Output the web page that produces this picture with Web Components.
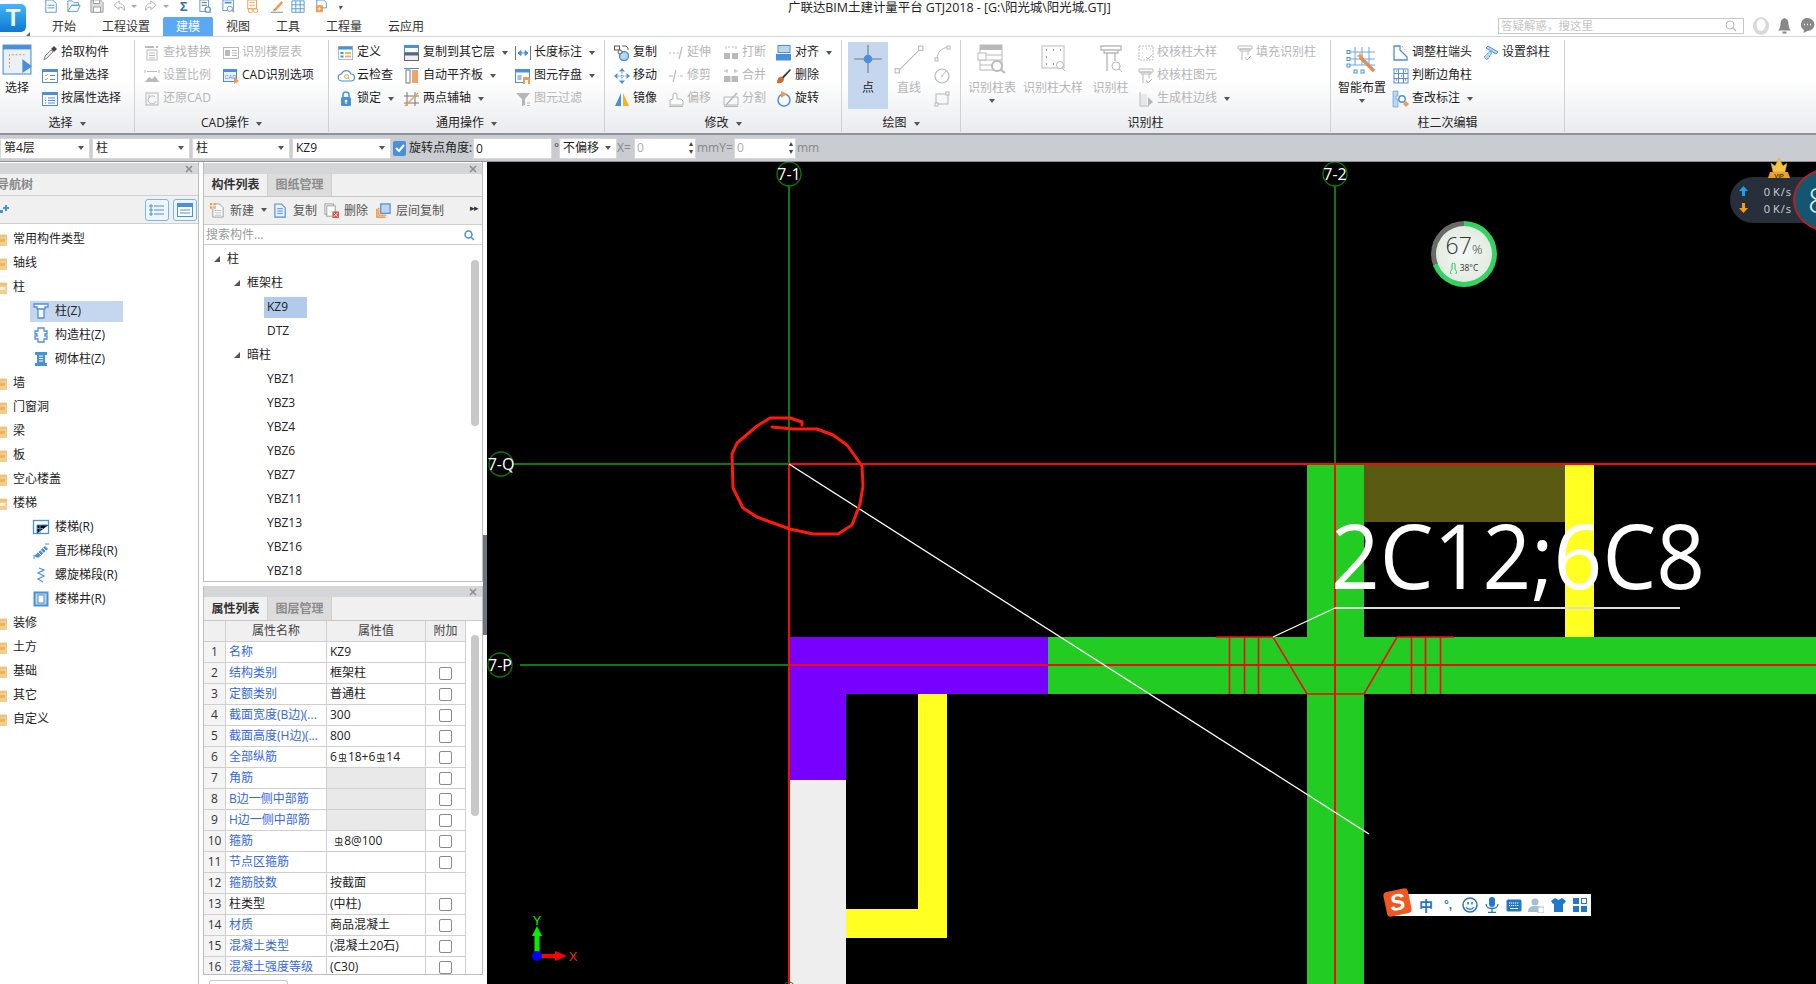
<!DOCTYPE html>
<html lang="zh">
<head>
<meta charset="utf-8">
<title>GTJ2018</title>
<style>
  html, body { margin: 0; height: 984px; overflow: hidden; background: #fff; }
  body { font: 12px/1.2 "Open Sans", "Noto Sans CJK SC", sans-serif; color: #222; }
</style>
</head>
<body>
<gtj-app>
  <gtj-head slot="head"></gtj-head>
  <gtj-ribbon slot="ribbon">
    <rb-group label="选择" w="135" pad="2" caret>
      <rb-large icon="select" label="选择" w="30"></rb-large>
      <rb-col pad="10">
        <rb-item icon="pick" label="拾取构件"></rb-item>
        <rb-item icon="batch" label="批量选择"></rb-item>
        <rb-item icon="attr" label="按属性选择"></rb-item>
      </rb-col>
    </rb-group>
    <rb-group label="CAD操作" w="194" pad="9" caret>
      <rb-col w="79">
        <rb-item icon="find" label="查找替换" off></rb-item>
        <rb-item icon="scale" label="设置比例" off></rb-item>
        <rb-item icon="restore" label="还原CAD" off></rb-item>
      </rb-col>
      <rb-col>
        <rb-item icon="floors" label="识别楼层表" off></rb-item>
        <rb-item icon="cad" label="CAD识别选项"></rb-item>
      </rb-col>
    </rb-group>
    <rb-group label="通用操作" w="276" pad="9" caret>
      <rb-col w="66">
        <rb-item icon="define" label="定义"></rb-item>
        <rb-item icon="cloud" label="云检查"></rb-item>
        <rb-item icon="lock" label="锁定" caret></rb-item>
      </rb-col>
      <rb-col w="111">
        <rb-item icon="copylayer" label="复制到其它层" caret></rb-item>
        <rb-item icon="align" label="自动平齐板" caret></rb-item>
        <rb-item icon="twopoint" label="两点辅轴" caret></rb-item>
      </rb-col>
      <rb-col>
        <rb-item icon="measure" label="长度标注" caret></rb-item>
        <rb-item icon="store" label="图元存盘" caret></rb-item>
        <rb-item icon="filter" label="图元过滤" off></rb-item>
      </rb-col>
    </rb-group>
    <rb-group label="修改" w="237" pad="9" caret>
      <rb-col w="54">
        <rb-item icon="copy" label="复制"></rb-item>
        <rb-item icon="move" label="移动"></rb-item>
        <rb-item icon="mirror" label="镜像"></rb-item>
      </rb-col>
      <rb-col w="55">
        <rb-item icon="extend" label="延伸" off></rb-item>
        <rb-item icon="trim" label="修剪" off></rb-item>
        <rb-item icon="offset" label="偏移" off></rb-item>
      </rb-col>
      <rb-col w="53">
        <rb-item icon="break" label="打断" off></rb-item>
        <rb-item icon="merge" label="合并" off></rb-item>
        <rb-item icon="split" label="分割" off></rb-item>
      </rb-col>
      <rb-col>
        <rb-item icon="alignto" label="对齐" caret></rb-item>
        <rb-item icon="erase" label="删除"></rb-item>
        <rb-item icon="rotate" label="旋转"></rb-item>
      </rb-col>
    </rb-group>
    <rb-group label="绘图" w="119" pad="6" caret>
      <rb-large icon="point" label="点" w="40" active></rb-large>
      <rb-large icon="line" label="直线" w="42" off></rb-large>
      <rb-col w="24" pad="4">
        <rb-item icon="arc" off></rb-item>
        <rb-item icon="circle" off></rb-item>
        <rb-item icon="rect" off></rb-item>
      </rb-col>
    </rb-group>
    <rb-group label="识别柱" w="370" pad="0">
      <rb-large icon="rectable" label="识别柱表" w="62" off caret></rb-large>
      <rb-large icon="recdetail" label="识别柱大样" w="60" off></rb-large>
      <rb-large icon="reccol" label="识别柱" w="55" off></rb-large>
      <rb-col w="99">
        <rb-item icon="chk1" label="校核柱大样" off></rb-item>
        <rb-item icon="chk2" label="校核柱图元" off></rb-item>
        <rb-item icon="edge" label="生成柱边线" off caret></rb-item>
      </rb-col>
      <rb-col>
        <rb-item icon="chk2" label="填充识别柱" off></rb-item>
      </rb-col>
    </rb-group>
    <rb-group label="柱二次编辑" w="234" pad="0">
      <rb-large icon="smart" label="智能布置" w="62" caret></rb-large>
      <rb-col w="90">
        <rb-item icon="head" label="调整柱端头"></rb-item>
        <rb-item icon="corner" label="判断边角柱"></rb-item>
        <rb-item icon="annot" label="查改标注" caret></rb-item>
      </rb-col>
      <rb-col>
        <rb-item icon="slant" label="设置斜柱"></rb-item>
      </rb-col>
    </rb-group>
  </gtj-ribbon>
  <gtj-options slot="options"></gtj-options>

  <gtj-nav slot="nav">
    <nav-folder label="常用构件类型"></nav-folder>
    <nav-folder label="轴线"></nav-folder>
    <nav-folder label="柱" open></nav-folder>
    <nav-leaf icon="n-col" label="柱(Z)" selected></nav-leaf>
    <nav-leaf icon="n-gz" label="构造柱(Z)"></nav-leaf>
    <nav-leaf icon="n-qt" label="砌体柱(Z)"></nav-leaf>
    <nav-folder label="墙"></nav-folder>
    <nav-folder label="门窗洞"></nav-folder>
    <nav-folder label="梁"></nav-folder>
    <nav-folder label="板"></nav-folder>
    <nav-folder label="空心楼盖"></nav-folder>
    <nav-folder label="楼梯" open></nav-folder>
    <nav-leaf icon="n-stair" label="楼梯(R)"></nav-leaf>
    <nav-leaf icon="n-run" label="直形梯段(R)"></nav-leaf>
    <nav-leaf icon="n-spiral" label="螺旋梯段(R)"></nav-leaf>
    <nav-leaf icon="n-well" label="楼梯井(R)"></nav-leaf>
    <nav-folder label="装修"></nav-folder>
    <nav-folder label="土方"></nav-folder>
    <nav-folder label="基础"></nav-folder>
    <nav-folder label="其它"></nav-folder>
    <nav-folder label="自定义"></nav-folder>
  </gtj-nav>

  <gtj-side slot="side">
    <gtj-parts>
      <tree-node level="0" label="柱"></tree-node>
      <tree-node level="1" label="框架柱"></tree-node>
      <tree-node level="2" label="KZ9" selected></tree-node>
      <tree-node level="2" label="DTZ"></tree-node>
      <tree-node level="1" label="暗柱"></tree-node>
      <tree-node level="2" label="YBZ1"></tree-node>
      <tree-node level="2" label="YBZ3"></tree-node>
      <tree-node level="2" label="YBZ4"></tree-node>
      <tree-node level="2" label="YBZ6"></tree-node>
      <tree-node level="2" label="YBZ7"></tree-node>
      <tree-node level="2" label="YBZ11"></tree-node>
      <tree-node level="2" label="YBZ13"></tree-node>
      <tree-node level="2" label="YBZ16"></tree-node>
      <tree-node level="2" label="YBZ18"></tree-node>
    </gtj-parts>
    <gtj-props></gtj-props>
  </gtj-side>

  <gtj-canvas slot="canvas">
    <cpu-meter></cpu-meter>
    <net-speed></net-speed>
    <ime-bar></ime-bar>
  </gtj-canvas>
</gtj-app>

<script>
const B = '#4a90d9', O = '#f39a4b', G = '#8c8c8c'

// every icon is [viewBox size, svg body]
const ICONS = {
	select: [28, `<rect x="1" y="1" width="26" height="27" fill="#eaf1fb" stroke="${B}"/><rect x="1" y="1" width="26" height="4" fill="${B}"/><path d="M7 22V10h14" fill="none" stroke="#f0a020" stroke-dasharray="2 1.5"/><path d="M19 14l9 7-9 6z" fill="${B}"/>`],
	pick: [16, `<path d="M2 15l1-4 6-6 2 2-6 6z" fill="#e6e6e6" stroke="#888"/><path d="M9 4l3-3 3 3-3 3z" fill="#444"/>`],
	batch: [16, `<rect x=".5" y="1.5" width="15" height="13" fill="#fff" stroke="${B}"/><rect x=".5" y="1.5" width="15" height="2.5" fill="${B}"/><path d="M3 7l1 1 2-2M3 11l1 1 2-2" fill="none" stroke="${O}"/><path d="M8 7.5h5M8 11.5h5" stroke="${B}"/>`],
	attr: [16, `<rect x=".5" y="1.5" width="15" height="13" fill="#fff" stroke="${B}"/><rect x=".5" y="1.5" width="15" height="2.5" fill="${B}"/><path d="M3 7h1M3 9.5h1M3 12h1M6 7h7M6 9.5h7M6 12h7" stroke="${B}"/>`],
	find: [16, `<path d="M1 2h9M12 2h2" stroke="${G}" stroke-width="2"/><rect x="3" y="5" width="10" height="10" fill="#fff" stroke="${G}"/><path d="M5 8h6M5 10.5h6M5 13h6" stroke="${G}"/>`],
	scale: [16, `<path d="M1 2v3M15 2v3M3 3.5h10" stroke="${G}"/><path d="M1 14l4-5 3 2 3-3 4 6z" fill="${G}"/>`],
	restore: [16, `<rect x="2" y="2" width="12" height="12" fill="none" stroke="${G}"/><path d="M11 6A4 4 0 1 0 12 10M5 7V3.5" fill="none" stroke="${G}"/>`],
	floors: [16, `<rect x=".5" y="2.5" width="15" height="11" fill="#fff" stroke="${G}"/><rect x="2" y="5" width="5" height="6" fill="${G}"/><path d="M9 5.5h5M9 8h5M9 10.5h5" stroke="${G}"/>`],
	cad: [16, `<rect x=".5" y="1.5" width="13" height="12" fill="#eaf1fb" stroke="${B}"/><rect x=".5" y="1.5" width="13" height="2.5" fill="${B}"/><text x="1.5" y="10.5" font-size="5.5" fill="${B}" font-family="Liberation Sans">CAD</text><path d="M11 9l5 4-5 3z" fill="${O}"/>`],
	define: [16, `<rect x=".5" y="1.5" width="14" height="13" fill="#fff" stroke="#9bbde6"/><rect x=".5" y="1.5" width="14" height="3" fill="${B}"/><path d="M2.5 7h3v2h-3zM2.5 10.5h3v2h-3z" fill="${B}"/><path d="M7 7h6v2H7zM7 10.5h6v2H7z" fill="#f6b26b"/>`],
	cloud: [16, `<path d="M4 13a3.5 3.5 0 0 1-.5-7A5 5 0 0 1 13 6a3.5 3.5 0 0 1 0 7z" fill="#fff" stroke="${B}" stroke-width="1.2"/><circle cx="8.5" cy="8.5" r="2" fill="none" stroke="${O}"/><path d="M10 10l1.5 1.5" stroke="${O}"/>`],
	lock: [16, `<rect x="3" y="6" width="10" height="9" rx="1.5" fill="${B}"/><path d="M5 6V4a3 3 0 0 1 6 0v2" fill="none" stroke="${B}" stroke-width="1.5"/><circle cx="8" cy="10" r="1.3" fill="#fff"/><path d="M8 10v3" stroke="#fff"/>`],
	copylayer: [16, `<rect x=".5" y=".5" width="14" height="7" fill="#fff" stroke="${B}"/><rect x=".5" y=".5" width="14" height="2.5" fill="${B}"/><rect x=".5" y="8.5" width="14" height="7" fill="#eee" stroke="#666"/><rect x=".5" y="8.5" width="14" height="2" fill="#666"/>`],
	align: [16, `<path d="M0 .5h15" stroke="${B}"/><rect x="2" y="2" width="4" height="13" fill="#fff" stroke="#777"/><rect x="8" y="2" width="6" height="13" fill="#f4a26b"/>`],
	twopoint: [16, `<path d="M3 1v14M11 1v14M0 5h15M0 12h15" stroke="#777"/><path d="M1 15L14 2" stroke="${O}" stroke-width="1.2"/>`],
	measure: [16, `<path d="M.5 1v14M15.5 1v14" stroke="#777"/><path d="M3 8h10M3 8l3-2.5v5zM13 8l-3-2.5v5z" fill="${B}" stroke="${B}"/>`],
	store: [16, `<rect x=".5" y="1.5" width="14" height="13" fill="#fff" stroke="${B}"/><rect x=".5" y="1.5" width="14" height="3" fill="${B}"/><rect x="2.5" y="7" width="4" height="5" fill="#9bbde6"/><rect x="8" y="9" width="7" height="7" fill="${O}"/><rect x="10" y="12" width="3" height="4" fill="#fff"/>`],
	filter: [16, `<path d="M1 2h14L10 8v6l-3 1V8z" fill="${G}"/><path d="M12 12h3M12 14.5h3" stroke="${G}"/>`],
	copy: [16, `<rect x=".5" y="1" width="5" height="4" fill="none" stroke="#555"/><path d="M8 1h4l2 2v2" fill="none" stroke="#555"/><circle cx="10" cy="11" r="4.5" fill="#bcd6f2" stroke="${B}" stroke-width="1.4"/><circle cx="6" cy="7" r="2" fill="#fff" stroke="#555"/>`],
	move: [16, `<path d="M8 0l3 3.500H5zM8 16l3-3.500H5zM0 8l3.500-3v6zM16 8l-3.500-3v6z" fill="${B}"/><path d="M4 8h8M8 4v8" stroke="${B}" stroke-dasharray="1.5 1"/>`],
	mirror: [16, `<path d="M7 2v13H1z" fill="${B}"/><path d="M9 2v13h6z" fill="#f5b323"/>`],
	extend: [16, `<path d="M1 8h2M5 8h2M9 8h2" stroke="${G}"/><path d="M11 14l3-12" stroke="${G}" stroke-width="1.2"/>`],
	trim: [16, `<path d="M1 8h4M10 8h1M12 8h3" stroke="${G}"/><path d="M5 14l3-12" stroke="${G}" stroke-width="1.2"/>`],
	offset: [16, `<path d="M2 14V9l3-1V4a2 2 0 0 1 4 0v4h4l2 2v4z" fill="#fff" stroke="${G}"/><path d="M1 15.5h14" stroke="${G}"/>`],
	break: [16, `<path d="M3 1v3M13 1v3" stroke="${G}"/><rect x="1" y="8" width="6" height="6" fill="${G}"/><rect x="9" y="8" width="6" height="6" fill="${G}"/><path d="M5 2h2M9 2h2" stroke="${G}"/>`],
	merge: [16, `<path d="M4 1v4M12 1v4M1 3h4M11 3h4" stroke="${G}"/><rect x="1" y="8" width="14" height="6" fill="${G}"/><path d="M8 8v6" stroke="#fff"/>`],
	split: [16, `<path d="M1 14V6h14v8z" fill="none" stroke="${G}"/><path d="M3 14L14 2" stroke="${G}" stroke-width="1.4"/><path d="M1 15.5h14" stroke="${G}"/>`],
	alignto: [16, `<rect x="2" y="0.5" width="12" height="7" fill="#bcd6f2" stroke="${B}"/><rect x="0" y="9" width="15" height="6.5" fill="${B}"/>`],
	erase: [16, `<path d="M6 9L14 1l1 1-8 9z" fill="#333"/><path d="M1 15c0-4 2-7 5-6l2 2c0 3-3 5-7 4z" fill="#d4692a"/>`],
	rotate: [16, `<circle cx="8" cy="9" r="6" fill="none" stroke="${B}" stroke-width="1.5"/><path d="M5 0l6 3-6 4z" fill="${O}"/>`],
	point: [28, `<path d="M14 1v26M1 14h26" stroke="#777"/><circle cx="14" cy="14" r="4" fill="${B}"/>`],
	line: [28, `<path d="M4 25L25 4" stroke="${G}"/><rect x="1" y="23" width="4" height="4" fill="#fff" stroke="${G}"/><rect x="23" y="2" width="4" height="4" fill="#fff" stroke="${G}"/>`],
	arc: [16, `<path d="M3 14C3 7 8 3 14 2" fill="none" stroke="${G}"/><rect x="1" y="13" width="3" height="3" fill="#fff" stroke="${G}"/><rect x="13" y="1" width="3" height="3" fill="#fff" stroke="${G}"/>`],
	circle: [16, `<circle cx="8" cy="8" r="7" fill="none" stroke="${G}" stroke-width="1.2"/><path d="M8 8l4-5" stroke="${G}"/><circle cx="8" cy="8" r="1" fill="${G}"/>`],
	rect: [16, `<rect x="2" y="3" width="12" height="10" fill="none" stroke="${G}"/><rect x="12" y="1" width="3" height="3" fill="#fff" stroke="${G}"/><rect x="1" y="12" width="3" height="3" fill="#fff" stroke="${G}"/>`],
	rectable: [30, `<rect x="3" y="1" width="22" height="25" fill="#fff" stroke="${G}"/><rect x="3" y="1" width="22" height="5" fill="${G}"/><path d="M3 11h22M3 16h22M3 21h22" stroke="${G}"/><rect x="1" y="9" width="8" height="7" fill="#fff" stroke="${G}"/><circle cx="20" cy="22" r="5" fill="#fff" stroke="${G}" stroke-width="2"/><path d="M24 26l4 3" stroke="${G}" stroke-width="2"/>`],
	recdetail: [30, `<rect x="4" y="2" width="22" height="22" fill="none" stroke="${G}"/><path d="M8 6h1M15 6h1M22 6h1M8 13h1M8 20h1M15 20h1" stroke="#555" stroke-width="2"/><circle cx="22" cy="21" r="3.5" fill="#fff" stroke="${G}"/><path d="M24 24l3 3" stroke="${G}"/>`],
	reccol: [30, `<path d="M5 2h20v4H5zM8 6h14v3H8z" fill="#fff" stroke="${G}" stroke-width="1.4"/><path d="M11 9v18M19 9v8" stroke="${G}" stroke-width="1.4"/><circle cx="20" cy="22" r="4" fill="#fff" stroke="${G}"/><path d="M23 25l3 3" stroke="${G}"/>`],
	chk1: [16, `<rect x="1" y="1" width="14" height="14" fill="none" stroke="${G}" stroke-dasharray="2 1"/><path d="M4 4h1M8 4h1M12 4h1M4 8h1M4 12h1" stroke="${G}"/><path d="M8 12l2 2 4-4" fill="none" stroke="${G}"/>`],
	chk2: [16, `<path d="M1 1h14v3H1zM3 4h10v2H3z" fill="#fff" stroke="${G}"/><path d="M5 6v9M11 6v4" stroke="${G}"/><path d="M8 12l2 3 4-4" fill="none" stroke="${G}"/>`],
	edge: [16, `<path d="M2 1v14h9" fill="none" stroke="${G}"/><rect x="3" y="3" width="6" height="11" fill="#ddd"/><path d="M10 6l5 5-5 4z" fill="${G}"/>`],
	smart: [30, `<path d="M8 3v18M15 3v18M22 3v18M2 8h26M2 15h26M2 21h26" stroke="#6aa5e6"/><rect x="0" y="6.5" width="3" height="3" fill="#fff" stroke="${B}"/><rect x="0" y="13.5" width="3" height="3" fill="#fff" stroke="${B}"/><rect x="0" y="20" width="3" height="3" fill="#fff" stroke="${B}"/><rect x="7" y="26" width="3" height="3" fill="#fff" stroke="${B}"/><rect x="14" y="26" width="3" height="3" fill="#fff" stroke="${B}"/><path d="M13 13l14 14" stroke="#d89060" stroke-width="3.5"/><path d="M13 8l1 3 3 1-3 1-1 3-1-3-3-1 3-1z" fill="${O}"/>`],
	head: [16, `<path d="M1 1h6v4l7 7v3H1z" fill="#fff" stroke="${B}" stroke-width="1.3"/><path d="M9 1l5 6" stroke="${O}" stroke-dasharray="2 1.5"/>`],
	corner: [16, `<rect x="1" y="1" width="14" height="14" fill="#fff" stroke="${B}"/><path d="M5.5 1v14M10.5 1v14M1 5.5h14M1 10.5h14" stroke="${B}"/><path d="M3 3h1M12 3h1M3 12h1M12 12h1M8 8h1" stroke="${O}" stroke-width="2"/>`],
	annot: [16, `<path d="M0 0h5v5H3v3h2v8H0z" fill="#bcd6f2" stroke="${B}" stroke-width=".6"/><circle cx="9" cy="8" r="3.2" fill="#fff" stroke="${B}" stroke-width="1.4"/><path d="M11 10l2 2" stroke="${B}"/><path d="M13 10l3 3-3 3-3-3z" fill="${O}"/>`],
	slant: [16, `<path d="M5 1l10 6-2 2L3 3z" fill="#bcd6f2" stroke="${B}"/><path d="M7 6l2 2-5 7-3-3z" fill="#bcd6f2" stroke="${B}" stroke-dasharray="1.5 .7"/>`],
	'n-col': [16, `<path d="M1 1h14v3h-3v2H4V4H1zM5 6h6v9H5z" fill="#fff" stroke="${B}" stroke-width="1.3"/>`],
	'n-gz': [16, `<path d="M5 1h6v3h3v3h-2v2h2v3h-3v3H5v-3H2V9h2V7H2V4h3z" fill="#fff" stroke="${B}" stroke-width="1.3"/>`],
	'n-qt': [16, `<path d="M2 1h12v3h-2v8h2v3H2v-3h2V4H2z" fill="${B}"/><path d="M6 5h4M6 7.5h4M6 10h4" stroke="#fff"/>`],
	'n-stair': [16, `<rect x=".5" y="1.5" width="15" height="13" fill="#fff" stroke="${B}" stroke-width="1.3"/><path d="M4 14.5V6h11.5M4 9.5h6M7 6v8.5" stroke="${B}"/>`],
	'n-run': [16, `<path d="M1 13L12 3l3 3L5 15z" fill="${B}"/><path d="M5 9l3 3M7.500 7l3 3M10 5l3 3" stroke="#fff"/><path d="M1 12v4M12 1h4" stroke="${B}"/>`],
	'n-spiral': [16, `<path d="M6 1l5 2-6 3 6 3-6 3 5 3" fill="none" stroke="${B}" stroke-width="1.2"/>`],
	'n-well': [16, `<rect x="1.500" y="1.500" width="13" height="13" fill="#bcd6f2" stroke="${B}" stroke-width="2"/><rect x="5" y="4" width="6" height="8" fill="#fff" stroke="${B}"/>`],
	'p-new': [16, `<path d="M3 1h7l4 4v10H3z" fill="#fff" stroke="#999"/><path d="M5 8h7M5 10.500h7M5 13h7" stroke="#bbb"/><rect x="0" y="0" width="6" height="6" fill="${O}"/><path d="M0 3h6M3 0v6" stroke="#fff"/>`],
	'p-copy': [16, `<path d="M2 1h7l4 4v10H2z" fill="#eaf1fb" stroke="${B}" stroke-width="1.200"/><path d="M4.500 6h6M4.500 8.500h6M4.500 11h6" stroke="${B}"/>`],
	'p-del': [16, `<rect x="1" y="1" width="9" height="11" fill="#fff" stroke="#999"/><rect x="3" y="3" width="9" height="11" fill="#fff" stroke="#999"/><rect x="9" y="9" width="7" height="7" fill="#e0524d"/><path d="M10.500 10.500l4 4M14.500 10.500l-4 4" stroke="#fff"/>`],
	'p-floor': [16, `<path d="M1 6v9h9" fill="none" stroke="#f07c1f" stroke-width="1.300"/><path d="M3 5v8h8" fill="none" stroke="#f07c1f" stroke-width="1"/><rect x="5" y="1" width="10" height="10" fill="#bcd6f2" stroke="${B}" stroke-width="1.300"/>`],
	'q-new': [16, `<path d="M2 0h8l4 4v10H2z" fill="#fff" stroke="${B}"/><path d="M4 6h8M4 9h8" stroke="${B}"/>`],
	'q-open': [16, `<path d="M1 13V1h5l2 2h5v3H5l-4 7h11l3-7H5" fill="#fff" stroke="${B}"/>`],
	'q-save': [16, `<path d="M1 0h11l3 3v11H1z" fill="#ddd" stroke="#999"/><rect x="4" y="0" width="7" height="4" fill="#fff" stroke="#999"/><rect x="4" y="8" width="8" height="6" fill="#fff" stroke="#999"/>`],
	'q-undo': [16, `<path d="M7 1L1 6l6 5V8c3 0 5 1 6 4 1-5-2-8-6-8z" fill="#fff" stroke="#aaa"/>`],
	'q-redo': [16, `<path d="M9 1l6 5-6 5V8C6 8 4 9 3 12 2 7 5 4 9 4z" fill="#fff" stroke="#aaa"/>`],
	'q-sum': [16, `<text x="3" y="13" font-size="15" font-weight="700" fill="#2f6fb5" font-family="Liberation Sans">Σ</text>`],
	'q-a': [16, `<rect x="1" y="0" width="10" height="13" fill="#fff" stroke="${B}"/><path d="M3 3h6M3 6h6" stroke="#555"/><circle cx="10" cy="11" r="3" fill="#fff" stroke="${B}" stroke-width="1.4"/><path d="M12 13l2 2" stroke="${O}" stroke-width="1.5"/>`],
	'q-b': [16, `<rect x="1" y="0" width="12" height="12" fill="#fff" stroke="${B}"/><path d="M3 3h8" stroke="${B}" stroke-width="2"/><circle cx="9" cy="10" r="3" fill="#fff" stroke="${B}"/><path d="M11 12l3 2" stroke="${O}" stroke-width="1.5"/>`],
	'q-c': [16, `<rect x="2" y="0" width="10" height="10" fill="#fff" stroke="${O}"/><path d="M4 3h6M4 6h6" stroke="${O}"/><circle cx="5" cy="12" r="2.500" fill="none" stroke="${O}"/><circle cx="11" cy="12" r="2.500" fill="none" stroke="${O}"/>`],
	'q-d': [16, `<path d="M5 10L13 1l2 2-8 9z" fill="${O}"/><path d="M1 14h14" stroke="#777"/><path d="M3 12l2-2 2 2z" fill="#777"/>`],
	'q-e': [16, `<path d="M1 1h14v13H1zM5.500 1v13M10.500 1v13M1 5.500h14M1 10h14" fill="#fff" stroke="${B}"/>`],
	'q-f': [16, `<path d="M2 0h8l3 3v6H2z" fill="#fff" stroke="${B}"/><rect x="1" y="6" width="8" height="8" fill="${O}"/><path d="M3 10h4M5 8v4" stroke="#fff"/>`]
}

function ic(name, size = 16) {
	const [vb, body] = ICONS[name]
	return `<svg width="${size}" height="${size}" viewBox="0 0 ${vb} ${vb}" style="display:block;overflow:visible">${body}</svg>`
}

const CARET = `<i style="display:inline-block;width:0;height:0;border:3px solid transparent;border-top:4px solid #555;border-bottom:0;margin-left:7px;vertical-align:middle"></i>`

class GtjApp extends HTMLElement {
	constructor() {
		super()
		this.attachShadow({ mode: 'open' })
		this.shadowRoot.innerHTML = `
      <style>
        :host { display: block; width: 1816px; height: 984px; overflow: hidden; }
        #main { display: flex; height: 822px; }
      </style>
      <slot name="head"></slot>
      <slot name="ribbon"></slot>
      <slot name="options"></slot>
      <div id="main">
        <slot name="nav"></slot>
        <slot name="side"></slot>
        <slot name="canvas"></slot>
      </div>
    `
	}
}

class GtjHead extends HTMLElement {
	constructor() {
		super()
		this.attachShadow({ mode: 'open' })
		// centre x of each quick access icon in the title bar, c is a little dropdown arrow
		const qa = [[51, 'q-new'], [74, 'q-open'], [97, 'q-save'], [120, 'q-undo'], [134, 'c'], [150, 'q-redo'], [166, 'c'], [184, 'q-sum'], [206, 'q-a'], [229, 'q-b'], [253, 'q-c'], [277, 'q-d'], [298, 'q-e'], [322, 'q-f']]
		let right = 35
		const qaHtml = qa.map(([cx, n]) => {
			const w = n === 'c' ? 6 : 14
			const ml = cx - w / 2 - right
			right = cx + w / 2
			return n === 'c' ? `<i class="qc" style="margin-left:${ml}px"></i>` : `<span style="margin-left:${ml}px">${ic(n, 14)}</span>`
		}).join('')
		const tabs = [['开始', 50], ['工程设置', 74], ['建模', 50, 1], ['视图', 50], ['工具', 50], ['工程量', 62], ['云应用', 62]]
		this.shadowRoot.innerHTML = `
      <style>
        :host { display: flex; height: 37px; background: #fff; box-sizing: border-box; border-bottom: 1px solid #d4d6d9; }
        #logo { width: 35px; flex: none; position: relative; }
        #logo b {
          display: flex; align-items: center; justify-content: center;
          width: 26px; height: 28px; margin-top: 4px;
          border-radius: 0 5px 5px 0;
          background: linear-gradient(#45b6f6, #0c78d0);
          color: #e8f6ff; font: 700 24px "Liberation Sans", sans-serif;
        }
        #logo:after { content: ''; position: absolute; left: 26px; top: 32px; border: 2px solid transparent; border-right-color: #666; border-bottom-color: #666; }
        #col { flex: 1; display: flex; flex-direction: column; }
        #qa { display: flex; height: 17px; overflow: hidden; align-items: flex-start; }
        #qa span { display: block; }
        .qc { flex: none; width: 0; height: 0; margin-top: 5px; border: 3px solid transparent; border-top: 3px solid #aaa; border-bottom: 0; }
        #more { margin: 3px 0 0 9px; color: #555; font-size: 8px; line-height: 7px; }
        #title { position: absolute; left: 788px; top: 0; font-size: 12.45px; line-height: 15px; color: #222; white-space: nowrap; }
        #tabs { display: flex; height: 19px; align-items: stretch; padding-left: 4px; }
        .tab { display: flex; align-items: center; justify-content: center; color: #333; padding-top: 1px; box-sizing: border-box; }
        .tab.on { background: #5aa9f2; color: #fff; border-radius: 2px 2px 0 0; }
        #find {
          margin: 1px 0 2px auto; width: 246px; height: 16px; box-sizing: border-box; border: 1px solid #c6c6c6;
          display: flex; align-items: center; justify-content: space-between; padding: 0 6px 0 2px; color: #c4c4c4; font-size: 11.5px;
        }
        #me { display: flex; gap: 9px; width: 72px; padding-left: 9px; box-sizing: border-box; align-items: center; margin-top: -2px; }
      </style>
      <div id="logo"><b>T</b></div>
      <div id="col">
        <div id="qa">${qaHtml}<i id="more">▾</i></div>
        <div id="title">广联达BIM土建计量平台 GTJ2018 - [G:\\阳光城\\阳光城.GTJ]</div>
        <div id="tabs">
          ${tabs.map(([t, w, on]) => `<div class="tab ${on ? 'on' : ''}" style="width:${w}px">${t}</div>`).join('')}
          <div id="find">答疑解惑，搜这里
            <svg width="12" height="12" viewBox="0 0 12 12"><circle cx="5" cy="5" r="4" fill="none" stroke="#bbb"/><path d="M8 8l3 3" stroke="#bbb" stroke-width="1.400"/></svg>
          </div>
          <div id="me">
            <svg width="16" height="18" viewBox="0 0 16 18"><ellipse cx="8" cy="9" rx="8" ry="9" fill="#d9d9d9"/><ellipse cx="8" cy="8" rx="4.500" ry="6" fill="#fff"/></svg>
            <svg width="13" height="16" viewBox="0 0 13 16"><path d="M6.500 0c-3 1-4 3-4 6 0 3-1 5-2.500 6.500h13C11.500 11 10.500 9 10.500 6c0-3-1-5-4-6z" fill="#888"/><rect x="4.500" y="13.500" width="4" height="2" fill="#888"/></svg>
            <svg width="15" height="15" viewBox="0 0 15 15"><path d="M7.500 0a7 6.500 0 0 1 0 13l-4 2 .5-3A6.500 6.500 0 0 1 7.500 0z" fill="#888"/><path d="M4 6.500h1M7 6.500h1M10 6.500h1" stroke="#fff" stroke-width="1.500"/></svg>
          </div>
        </div>
      </div>
    `
	}
}

class GtjRibbon extends HTMLElement {
	constructor() {
		super()
		this.attachShadow({ mode: 'open' })
		this.shadowRoot.innerHTML = `
      <style>
        :host { display: flex; height: 98px; box-sizing: border-box; background: linear-gradient(#fff 45%, #e9ebee); border-bottom: 2px solid #8f9296; }
      </style>
      <slot></slot>
    `
	}
}

class RbGroup extends HTMLElement {
	connectedCallback() {
		if (this.shadowRoot) return
		this.attachShadow({ mode: 'open' })
		const w = this.getAttribute('w')
		this.shadowRoot.innerHTML = `
      <style>
        :host { display: flex; flex-direction: column; flex: none; box-sizing: border-box; width: ${w}px; height: 92px; margin-top: 3px; border-right: 1px solid #cfd1d4; }
        #body { display: flex; height: 73px; box-sizing: border-box; padding: 1px 0 0 ${this.getAttribute('pad') || 0}px; }
        #label { height: 19px; box-sizing: border-box; padding-top: 2px; display: flex; align-items: center; justify-content: center; color: #222; }
      </style>
      <div id="body"><slot></slot></div>
      <div id="label">${this.getAttribute('label')}${this.hasAttribute('caret') ? CARET : ''}</div>
    `
	}
}

class RbCol extends HTMLElement {
	connectedCallback() {
		if (this.shadowRoot) return
		this.attachShadow({ mode: 'open' })
		const w = this.getAttribute('w')
		this.shadowRoot.innerHTML = `
      <style>
        :host { display: flex; flex-direction: column; flex: none; box-sizing: border-box; ${w ? `width:${w}px;` : ''} padding-left: ${this.getAttribute('pad') || 0}px; }
      </style>
      <slot></slot>
    `
	}
}

class RbItem extends HTMLElement {
	connectedCallback() {
		if (this.shadowRoot) return
		this.attachShadow({ mode: 'open' })
		const off = this.hasAttribute('off')
		const label = this.getAttribute('label')
		this.shadowRoot.innerHTML = `
      <style>
        :host { display: flex; align-items: center; height: 23px; white-space: nowrap; color: ${off ? '#b5b5b5' : '#1c1c1c'}; }
        #i { width: 16px; height: 16px; margin-right: 3px; flex: none; ${off ? 'opacity:.6;' : ''} }
      </style>
      <span id="i">${ic(this.getAttribute('icon'))}</span>
      ${label ? `<span>${label}</span>` : ''}${this.hasAttribute('caret') ? CARET : ''}
    `
	}
}

class RbLarge extends HTMLElement {
	connectedCallback() {
		if (this.shadowRoot) return
		this.attachShadow({ mode: 'open' })
		const off = this.hasAttribute('off')
		this.shadowRoot.innerHTML = `
      <style>
        :host {
          display: flex; flex-direction: column; align-items: center; flex: none; box-sizing: border-box;
          width: ${this.getAttribute('w')}px; height: 67px; margin-top: 1px; padding-top: 2px;
          white-space: nowrap; color: ${off ? '#b5b5b5' : '#1c1c1c'};
          ${this.hasAttribute('active') ? 'background:#c5d7ee;' : ''}
        }
        #i { height: 30px; ${off ? 'opacity:.6;' : ''} }
        #t { margin-top: 6px; line-height: 15px; }
        i { margin: 4px 0 0 !important; }
      </style>
      <span id="i">${ic(this.getAttribute('icon'), 30)}</span>
      <span id="t">${this.getAttribute('label')}</span>
      ${this.hasAttribute('caret') ? CARET : ''}
    `
	}
}

class GtjOptions extends HTMLElement {
	constructor() {
		super()
		this.attachShadow({ mode: 'open' })
		const combo = (t, w, ml = 0) => `<div class="combo" style="width:${w}px;margin-left:${ml}px"><span>${t}</span><i></i></div>`
		const spin = (w) => `<div class="spin" style="width:${w}px"><span>0</span><em>▴<br>▾</em></div>`
		this.shadowRoot.innerHTML = `
      <style>
        :host { display: flex; align-items: center; height: 27px; box-sizing: border-box; background: #c9ccd1; border-bottom: 1px solid #8f9296; overflow: hidden; white-space: nowrap; }
        span { box-sizing: border-box; flex: none; }
        .combo { height: 21px; box-sizing: border-box; flex: none; background: #fff; border: 1px solid #d8d8d8; display: flex; align-items: center; justify-content: space-between; padding: 0 5px 0 3px; }
        .combo i { border: 3px solid transparent; border-top: 4px solid #555; border-bottom: 0; }
        .combo:first-child { padding-left: 0; }
        .combo:first-child span { margin-left: -3px; }
        #chk { flex: none; width: 13px; height: 15px; margin: 0 3px 0 2px; background: #4a90d9; border-radius: 2px; display: flex; align-items: center; justify-content: center; }
        .input { height: 21px; box-sizing: border-box; flex: none; width: 79px; background: #fff; border: 1px solid #d8d8d8; padding-left: 2px; line-height: 19px; }
        .spin { height: 21px; box-sizing: border-box; flex: none; background: #fff; border: 1px solid #d8d8d8; display: flex; justify-content: space-between; align-items: center; padding: 0 2px 0 2px; color: #aaa; }
        .spin em { font: normal 8px/8px "DejaVu Sans", sans-serif; color: #444; }
        .dim { color: #888; }
      </style>
      ${combo('第4层', 90)}${combo('柱', 98, 2)}${combo('柱', 98, 2)}${combo('KZ9', 99, 2)}
      <div id="chk"><svg width="10" height="9" viewBox="0 0 10 9"><path d="M1 4l3 3 5-6" fill="none" stroke="#fff" stroke-width="2"/></svg></div>
      <span style="width:64px">旋转点角度:</span>
      <div class="input">0</div>
      <span style="width:7px;padding-left:2px;color:#444">°</span>
      ${combo('不偏移', 58)}
      <span class="dim" style="width:17px">X=</span>${spin(62)}
      <span class="dim" style="width:38px;padding-left:1px">mmY=</span>${spin(62)}
      <span class="dim" style="padding-left:1px">mm</span>
    `
	}
}

const PANEL_STRIP = `<div class="strip"><svg width="8" height="8" viewBox="0 0 8 8"><path d="M1 1l6 6M7 1L1 7" stroke="#8d8d8d" stroke-width="1.600"/></svg></div>`
const PANEL_CSS = `
  .strip { height: 11px; margin-top: 1px; background: #d5d6da; display: flex; justify-content: flex-end; align-items: center; padding-right: 5px; }
  .tabs { display: flex; height: 22px; background: #f0f0f0; border-bottom: 1px solid #c9c9c9; }
  .tabs div { width: 64px; padding-top: 1px; box-sizing: border-box; display: flex; align-items: center; justify-content: center; font-weight: 700; color: #333; border-right: 1px solid #d0d0d0; }
  .tabs div + div { background: #dcdcdc; color: #8b8b8b; font-weight: 700; }
`

class GtjNav extends HTMLElement {
	constructor() {
		super()
		this.attachShadow({ mode: 'open' })
		const btn = (inner) => `<div class="tb"><svg width="16" height="14" viewBox="0 0 16 14">${inner}</svg></div>`
		this.shadowRoot.innerHTML = `
      <style>
        :host { display: flex; flex-direction: column; flex: none; width: 199px; height: 100%; box-sizing: border-box; border-right: 1px solid #bdbdbd; background: #fff; overflow: hidden; }
        ${PANEL_CSS}
        #hd { height: 21px; box-sizing: border-box; padding-top: 1px; margin-left: -3px; display: flex; align-items: center; background: #f0f0f0; color: #888; font-weight: 700; }
        #tools { height: 27px; display: flex; align-items: center; justify-content: flex-end; gap: 4px; padding-right: 1px; background: #f0f0f0; border-top: 1px solid #cfcfcf; border-bottom: 1px solid #cfcfcf; position: relative; }
        .tb { width: 22px; height: 20px; border: 1px solid #7db4ea; border-radius: 3px; background: #eef5fc; display: flex; align-items: center; justify-content: center; }
        #star { position: absolute; left: 0; top: 8px; }
        #tree { padding-top: 3px; }
      </style>
      ${PANEL_STRIP}
      <div id="hd">导航树</div>
      <div id="tools">
        <svg id="star" width="9" height="10" viewBox="0 0 9 10"><path d="M6 1v6M3 4h6" stroke="#4a90d9" stroke-width="2"/><path d="M0 6h3v3H0z" fill="#4a90d9"/></svg>
        ${btn(`<path d="M1 2h2v2H1zM1 6h2v2H1zM1 10h2v2H1z" fill="none" stroke="${B}"/><path d="M5 3h10M5 7h10M5 11h10" stroke="${B}"/>`)}
        ${btn(`<rect x=".5" y=".5" width="15" height="13" fill="#fff" stroke="${B}"/><rect x=".5" y=".5" width="15" height="3.500" fill="${B}"/><path d="M3 7h10M3 10h10" stroke="${B}"/>`)}
      </div>
      <div id="tree"><slot></slot></div>
    `
	}
}

class NavFolder extends HTMLElement {
	connectedCallback() {
		if (this.shadowRoot) return
		this.attachShadow({ mode: 'open' })
		this.shadowRoot.innerHTML = `
      <style>
        :host { display: flex; align-items: center; height: 24px; margin-left: -7px; gap: 6px; color: #222; }
      </style>
      <svg width="14" height="14" viewBox="0 0 14 14"><path d="M0 1h5l1 1.500h8V14H0z" fill="#f3cd8c"/><path d="M0 4h14" stroke="#e7b469"/><path d="M7 7h5v3H7z" fill="${this.hasAttribute('open') ? '#fff' : '#e8a94f'}" opacity=".7"/></svg>
      <span>${this.getAttribute('label')}</span>
    `
	}
}

class NavLeaf extends HTMLElement {
	connectedCallback() {
		if (this.shadowRoot) return
		this.attachShadow({ mode: 'open' })
		this.shadowRoot.innerHTML = `
      <style>
        :host { display: flex; align-items: center; height: 24px; margin-left: 30px; }
        div { display: flex; align-items: center; gap: 6px; width: 93px; height: 21px; padding-left: 3px; box-sizing: border-box; white-space: nowrap; ${this.hasAttribute('selected') ? 'background:#c5d7ee;' : ''} }
      </style>
      <div>${ic(this.getAttribute('icon'), 16)}<span>${this.getAttribute('label')}</span></div>
    `
	}
}

class GtjSide extends HTMLElement {
	constructor() {
		super()
		this.attachShadow({ mode: 'open' })
		this.shadowRoot.innerHTML = `
      <style>
        :host { display: flex; flex-direction: column; flex: none; width: 288px; box-sizing: border-box; padding-left: 4px; padding-right: 4px; height: 100%; background: #fff; position: relative; }
        #handle { position: absolute; right: 0; top: 373px; width: 4px; height: 100px; background: #6b7681; }
        #foot { width: 79px; height: 9px; margin: 5px 0 0 6px; flex: none; box-sizing: border-box; border: 1px solid #c9c9c9; border-bottom: 0; border-radius: 3px 3px 0 0; background: #fff; }
      </style>
      <slot></slot>
      <div id="foot"></div>
      <div id="handle"></div>
    `
	}
}

class GtjParts extends HTMLElement {
	constructor() {
		super()
		this.attachShadow({ mode: 'open' })
		const tool = (n, t, w, extra = '') => `<span class="t" style="width:${w}px">${ic(n, 15)}<em>${t}</em>${extra}</span>`
		this.shadowRoot.innerHTML = `
      <style>
        :host { display: flex; flex-direction: column; flex: none; height: 420px; box-sizing: border-box; border-right: 1px solid #bdbdbd; border-left: 1px solid #bdbdbd; border-bottom: 1px solid #bdbdbd; }
        ${PANEL_CSS}
        #tools { height: 27px; box-sizing: content-box; display: flex; align-items: center; background: #f0f0f0; border-bottom: 1px solid #cfcfcf; padding-left: 6px; color: #555; position: relative; }
        .t { display: flex; align-items: center; flex: none; }
        .t em { font-style: normal; margin-left: 5px; padding-top: 1px; }
        #more { position: absolute; right: 4px; top: 6px; font-size: 9px; letter-spacing: -1px; color: #333; }
        #search { height: 19px; padding: 1px 7px 0 2px; box-sizing: border-box; background: #fff; border-bottom: 1px solid #cfcfcf; display: flex; align-items: center; justify-content: space-between; color: #9a9a9a; height: 20px; }
        #tree { flex: 1; position: relative; overflow: hidden; padding-top: 2px; }
        #bar { position: absolute; right: 3px; top: 15px; width: 8px; height: 166px; border-radius: 4px; background: #c8c8c8; }
      </style>
      ${PANEL_STRIP}
      <div class="tabs"><div>构件列表</div><div>图纸管理</div></div>
      <div id="tools">
        ${tool('p-new', '新建', 63, CARET)}
        ${tool('p-copy', '复制', 51)}
        ${tool('p-del', '删除', 52)}
        ${tool('p-floor', '层间复制', 80)}
        <span id="more">▸▸</span>
      </div>
      <div id="search"><span>搜索构件...</span>
        <svg width="11" height="11" viewBox="0 0 11 11"><circle cx="4.500" cy="4.500" r="3.500" fill="none" stroke="#4a90d9" stroke-width="1.500"/><path d="M7 7l3 3" stroke="#4a90d9" stroke-width="1.500"/></svg>
      </div>
      <div id="tree"><slot></slot><div id="bar"></div></div>
    `
	}
}

class TreeNode extends HTMLElement {
	connectedCallback() {
		if (this.shadowRoot) return
		this.attachShadow({ mode: 'open' })
		const level = +this.getAttribute('level')
		const tri = level < 2 ? `<svg width="6" height="6" viewBox="0 0 6 6" style="margin-right:7px"><path d="M6 0v6H0z" fill="#555"/></svg>` : ''
		const left = level === 0 ? 10 : level === 1 ? 30 : 60
		this.shadowRoot.innerHTML = `
      <style>
        :host { display: flex; align-items: center; height: 24px; padding-left: ${left}px; white-space: nowrap; }
        span { display: flex; align-items: center; height: 21px; ${level === 2 ? 'width:43px;padding-left:3px;box-sizing:border-box;' : ''} ${this.hasAttribute('selected') ? 'background:#b3cbea;' : ''} }
      </style>
      ${tri}<span>${this.getAttribute('label')}</span>
    `
	}
}

const PROP_ROWS = [
	['名称', 'KZ9', 0],
	['结构类别', '框架柱', 1],
	['定额类别', '普通柱', 1],
	['截面宽度(B边)(...', '300', 1],
	['截面高度(H边)(...', '800', 1],
	['全部纵筋', '6<sup>虫</sup>18+6<sup>虫</sup>14', 1],
	['角筋', '', 1, 'gray'],
	['B边一侧中部筋', '', 1, 'gray'],
	['H边一侧中部筋', '', 1, 'gray'],
	['箍筋', '&nbsp;<sup>虫</sup>8@100', 1],
	['节点区箍筋', '', 1],
	['箍筋肢数', '按截面', 0],
	['柱类型', '(中柱)', 1, 'plain'],
	['材质', '商品混凝土', 1],
	['混凝土类型', '(混凝土20石)', 1],
	['混凝土强度等级', '(C30)', 1]
]

class GtjProps extends HTMLElement {
	constructor() {
		super()
		this.attachShadow({ mode: 'open' })
		const rows = PROP_ROWS.map(([name, val, chk, kind], i) => `
        <div class="n">${i + 1}</div>
        <div class="k ${kind === 'plain' ? 'plain' : ''}">${name}</div>
        <div class="v ${kind === 'gray' ? 'gray' : ''}">${val}</div>
        <div class="a">${chk ? '<i></i>' : ''}</div>`).join('')
		this.shadowRoot.innerHTML = `
      <style>
        :host { display: flex; flex-direction: column; flex: none; height: 389px; margin-top: 4px; box-sizing: border-box; border: 1px solid #bdbdbd; border-top: 0; position: relative; }
        ${PANEL_CSS}
        .strip { margin-top: 0; }
        .tabs { height: 23px; }
        #wrap { position: relative; flex: 1; overflow: hidden; background: #fff; }
        #grid { display: grid; grid-template-columns: 22px 101px 99px 40px; grid-auto-rows: 21px; width: 262px; }
        #grid > div { box-sizing: border-box; padding-top: 1px; border-right: 1px solid #cfcfcf; border-bottom: 1px solid #cfcfcf; display: flex; align-items: center; white-space: nowrap; overflow: hidden; }
        .h { background: #f0f0f0; justify-content: center; color: #444; }
        #grid > .n { justify-content: center; background: #f4f4f4; color: #333; padding-top: 0; }
        .k { padding-left: 3px; color: #3568e0; }
        .k.plain { color: #222; }
        .v { padding-left: 3px; color: #222; }
        .v.gray { background: #e9e9e9; }
        .a { justify-content: center; }
        .a i { width: 13px; height: 13px; box-sizing: border-box; border: 1px solid #8a8a8a; border-radius: 2px; background: #fff; }
        sup { font-size: 9px; line-height: 8px; vertical-align: 4px; margin: 0 1px; }
        #bar { position: absolute; right: 3px; top: 14px; width: 8px; height: 181px; border-radius: 4px; background: #c8c8c8; }
      </style>
      ${PANEL_STRIP}
      <div class="tabs"><div>属性列表</div><div>图层管理</div></div>
      <div id="wrap">
        <div id="grid">
          <div class="h"></div><div class="h">属性名称</div><div class="h">属性值</div><div class="h">附加</div>
          ${rows}
        </div>
        <div id="bar"></div>
      </div>
    `
	}
}

class GtjCanvas extends HTMLElement {
	constructor() {
		super()
		this.attachShadow({ mode: 'open' })
		const bubble = (cx, cy, t) => `<circle cx="${cx}" cy="${cy}" r="12" fill="#000" stroke="#0a7a0a" stroke-width="1.300"/><text x="${cx}" y="${cy + 6}" fill="#fff" font-size="16" text-anchor="middle" font-family="Open Sans, sans-serif">${t}</text>`
		const red = '#f80808'
		this.shadowRoot.innerHTML = `
      <style>
        :host { display: block; flex: 1; position: relative; background: #000; }
        svg { display: block; }
      </style>
      <svg width="1329" height="822" viewBox="487 162 1329 822">
        <rect x="1364" y="465" width="201" height="57" fill="#5a5a12"/>
        <rect x="1565" y="465" width="29" height="172" fill="#ffff22"/>
        <path d="M1307 465h57v172h452v57h-452v290h-57V694h-259v-57h259z" fill="#22cc22"/>
        <path d="M789 637h259v57H846v86h-57z" fill="#7700ff"/>
        <rect x="789" y="780" width="57" height="204" fill="#eeeeee"/>
        <path d="M918 694h29v244H846v-29h72z" fill="#ffff22"/>

        <path d="M789 162v302M1335 162v302M505 464h284M520 665h269" stroke="#0a7a0a" stroke-width="2"/>
        <path d="M789 464v520M1335 464v520M789 464h1027M789 665h1027" stroke="${red}" stroke-width="2"/>
        <path d="M1216 637h57l34 57h57l33-57h57M1229.500 637v57M1244.500 637v57M1258.500 637v57M1411.500 637v57M1425.500 637v57M1440.500 637v57" fill="none" stroke="${red}" stroke-width="1.600"/>

        <path d="M789 464L1369 834" stroke="#fff" stroke-width="1.300"/>
        <path d="M1273 637l62-29" stroke="#fff" stroke-width="1.300"/>
        <path d="M1335 608h345" stroke="#ddd" stroke-width="1.800"/>
        <text x="1331" y="589" fill="#fff" font-size="90" textLength="374" lengthAdjust="spacingAndGlyphs" font-family="Open Sans, sans-serif">2C12;6C8</text>

        <path d="M772 427L793 429 817 429 833 435 847 445 862 466 863 486 860 504 852 525 838 534 813 534 790 529 773 523 757 517 743 508 733 488 732 454 737 443 757 426 770 418 790 418 802 422 802 425" fill="none" stroke="#ff1a0a" stroke-width="3" stroke-linejoin="round" stroke-linecap="round"/>

        ${bubble(789, 174, '7-1')}${bubble(1335, 174, '7-2')}${bubble(501, 464, '7-Q')}${bubble(500, 665, '7-P')}
        <circle cx="789" cy="988" r="6" fill="none" stroke="#0a7a0a"/>

        <path d="M537 955V932" stroke="#00ee00" stroke-width="5"/><path d="M537 926l-5 10h10z" fill="#00ee00"/>
        <path d="M537 956h20" stroke="#ff0000" stroke-width="4"/><path d="M567 956l-12-5v10z" fill="#ff0000"/>
        <circle cx="537" cy="956" r="5" fill="#0000ff"/>
        <text x="537" y="925" fill="#00ee00" font-size="13" text-anchor="middle" font-family="Liberation Sans, sans-serif">Y</text>
        <text x="573" y="961" fill="#ff2020" font-size="13" text-anchor="middle" font-family="Liberation Sans, sans-serif">X</text>
      </svg>
      <slot></slot>
    `
	}
}

class CpuMeter extends HTMLElement {
	constructor() {
		super()
		this.attachShadow({ mode: 'open' })
		this.shadowRoot.innerHTML = `
      <style>
        :host { position: absolute; left: 944px; top: 59px; width: 66px; height: 66px; border-radius: 50%; background: conic-gradient(#33d35f 0 250deg, #6a6a6a 250deg 360deg); display: flex; align-items: center; justify-content: center; }
        div { width: 56px; height: 56px; border-radius: 50%; background: radial-gradient(#f4f8f4, #dbe6db); display: flex; flex-direction: column; align-items: center; color: #333; line-height: 1; }
        b { font: 300 23px/23px "Open Sans", sans-serif; margin-top: 8px; }
        b small { font-size: 13px; }
        p { display: flex; align-items: center; gap: 3px; margin: 2px 0 0; font-size: 8.500px; }
      </style>
      <div><b>67<small>%</small></b>
        <p><svg width="7" height="11" viewBox="0 0 7 11"><path d="M2 6.500V1.500a1.500 1.500 0 0 1 3 0v5a3 3 0 1 1-3 0z" fill="none" stroke="#1fc759"/></svg><span>38°C</span></p>
      </div>
    `
	}
}

class NetSpeed extends HTMLElement {
	constructor() {
		super()
		this.attachShadow({ mode: 'open' })
		this.shadowRoot.innerHTML = `
      <style>
        :host { position: absolute; left: 1243px; top: 15px; width: 90px; height: 46px; padding-top: 6px; box-sizing: border-box; border-radius: 23px 0 0 23px; background: #27303a; color: #cfd5da; font: 11px/1 "Open Sans", sans-serif; }
        .r { display: flex; height: 17px; align-items: center; justify-content: flex-end; padding-right: 28px; gap: 2px; letter-spacing: 1px; position: relative; }
        .r svg { position: absolute; left: 9px; top: 3px; }
        #ball { position: absolute; left: 63px; top: -9px; width: 56px; height: 60px; border-radius: 50%; border: 2px solid #b52025; background: #14566f; color: #d9eef6; font: 300 34px/60px "Open Sans", sans-serif; padding-left: 13px; }
        #crown { position: absolute; left: 38px; top: -20px; width: 22px; height: 22px; }
      </style>
      <div class="r"><svg width="9" height="10" viewBox="0 0 9 10"><path d="M4.500 0L9 5H6v5H3V5H0z" fill="#17a2f0"/></svg><span>0</span>K/s</div>
      <div class="r"><svg width="9" height="10" viewBox="0 0 9 10"><path d="M4.500 10L9 5H6V0H3v5H0z" fill="#f79a17"/></svg><span>0</span>K/s</div>
      <div id="ball">8</div>
      <svg id="crown" viewBox="0 0 22 22"><path d="M3 6l4 3 4-8 4 8 4-3-2 9H5z" fill="#f5c542" stroke="#d9952a" stroke-width=".5"/><path d="M2 15h18l2 6H0z" fill="#e8a030"/><text x="11" y="20.500" font-size="6" font-weight="700" text-anchor="middle" fill="#5a3a10" font-family="Liberation Sans, sans-serif">VIP</text></svg>
    `
	}
}

class ImeBar extends HTMLElement {
	constructor() {
		super()
		this.attachShadow({ mode: 'open' })
		const C = '#2277cc'
		this.shadowRoot.innerHTML = `
      <style>
        :host { position: absolute; left: 908px; top: 732px; width: 196px; height: 22px; padding-left: 20px; background: #fff; display: flex; align-items: center; color: ${C}; box-sizing: border-box; }
        #s { position: absolute; left: -10px; top: -4px; width: 25px; height: 25px; border-radius: 4px; transform: rotate(-12deg); background: #f0581f; color: #fff; font: italic 700 23px/25px "Liberation Sans", sans-serif; text-align: center; }
        #row { display: grid; grid-auto-flow: column; grid-auto-columns: 22px; align-items: center; justify-items: center; }
        b { font: 700 14px/16px "Noto Sans CJK SC", sans-serif; }
        .p { font: 700 12px/14px "Liberation Sans", sans-serif; }
      </style>
      <div id="s">S</div>
      <div id="row">
        <b>中</b><span class="p">°,</span>
        <svg width="16" height="16" viewBox="0 0 16 16"><circle cx="8" cy="8" r="7" fill="none" stroke="${C}" stroke-width="1.500"/><path d="M6 5v2.500M10 5v2.500" stroke="${C}" stroke-width="1.500"/><path d="M4 10c2 3 6 3 8 0" fill="none" stroke="${C}" stroke-width="1.300"/></svg>
        <svg width="14" height="16" viewBox="0 0 14 16"><rect x="4" y="0" width="6" height="10" rx="3" fill="${C}"/><path d="M1 7c0 6 12 6 12 0M7 12v3M3 15.500h8" fill="none" stroke="${C}" stroke-width="1.300"/></svg>
        <svg width="16" height="13" viewBox="0 0 16 13"><rect x=".5" y=".5" width="15" height="12" rx="1.500" fill="${C}"/><path d="M3 4h10M3 6.500h10" stroke="#fff" stroke-dasharray="1.300 .7"/><path d="M4 9.500h8" stroke="#fff"/></svg>
        <svg width="16" height="15" viewBox="0 0 16 15"><circle cx="7" cy="4" r="3.500" fill="#a9bdd0"/><path d="M0 14c0-5 3-6 7-6s5 1 6 2v4z" fill="#a9bdd0"/><rect x="10" y="9" width="6" height="6" fill="#fff" stroke="#a9bdd0"/></svg>
        <svg width="15" height="14" viewBox="0 0 15 14"><path d="M4 0l3.500 2L11 0l4 3-2 3-1-.5V14H3V5.500L2 6 0 3z" fill="${C}"/></svg>
        <svg width="14" height="14" viewBox="0 0 14 14"><path d="M0 0h6v6H0zM0 8h6v6H0zM8 8h6v6H8z" fill="${C}"/><rect x="8.500" y=".5" width="5" height="5" fill="#fff" stroke="${C}"/></svg>
      </div>
    `
	}
}

customElements.define('gtj-app', GtjApp)
customElements.define('gtj-head', GtjHead)
customElements.define('gtj-ribbon', GtjRibbon)
customElements.define('rb-group', RbGroup)
customElements.define('rb-col', RbCol)
customElements.define('rb-item', RbItem)
customElements.define('rb-large', RbLarge)
customElements.define('gtj-options', GtjOptions)
customElements.define('gtj-nav', GtjNav)
customElements.define('nav-folder', NavFolder)
customElements.define('nav-leaf', NavLeaf)
customElements.define('gtj-side', GtjSide)
customElements.define('gtj-parts', GtjParts)
customElements.define('tree-node', TreeNode)
customElements.define('gtj-props', GtjProps)
customElements.define('gtj-canvas', GtjCanvas)
customElements.define('cpu-meter', CpuMeter)
customElements.define('net-speed', NetSpeed)
customElements.define('ime-bar', ImeBar)
</script>
</body>
</html>
